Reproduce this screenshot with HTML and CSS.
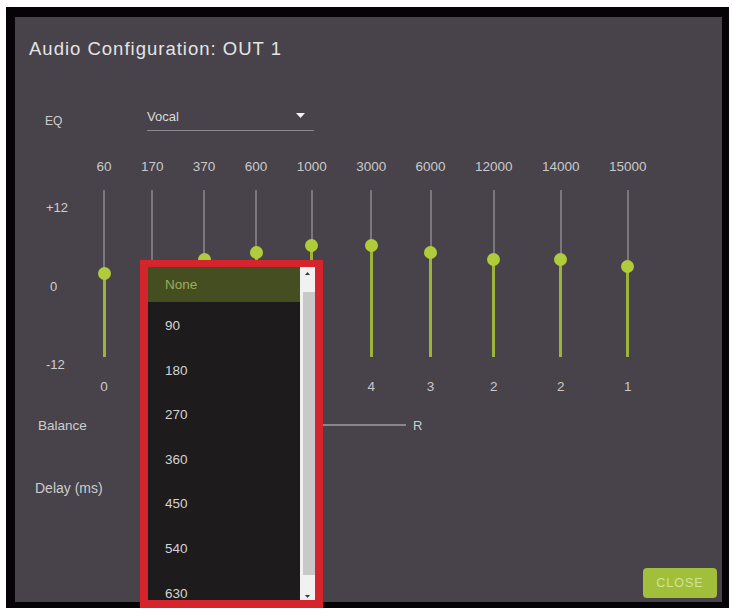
FILE: index.html
```html
<!DOCTYPE html>
<html lang="en">
<head>
<meta charset="utf-8">
<title>Audio Configuration: OUT 1</title>
<link rel="stylesheet" href="styles.css">
</head>
<body>
<div class="frame">
  <div class="panel">
    <h1 class="title">Audio Configuration: OUT 1</h1>

    <div class="eq-row">
      <span class="lbl eq-lbl">EQ</span>
      <div class="select">
        <span>Vocal</span>
        <svg class="caret" width="9" height="5" viewBox="0 0 9 5"><path d="M0 0H9L4.5 5Z"/></svg>
      </div>
    </div>

    <div class="eq">
      <div class="axis">
        <span>+12</span>
        <span class="zero">0</span>
        <span>-12</span>
      </div>
      <div class="bands">
        <div class="band" style="--p:50%"><span class="freq">60</span><div class="track"><div class="fill"></div><div class="thumb"></div></div><span class="val">0</span></div>
        <div class="band" style="--p:54.17%"><span class="freq">170</span><div class="track"><div class="fill"></div><div class="thumb"></div></div><span class="val">1</span></div>
        <div class="band" style="--p:58.33%"><span class="freq">370</span><div class="track"><div class="fill"></div><div class="thumb"></div></div><span class="val">2</span></div>
        <div class="band" style="--p:62.5%"><span class="freq">600</span><div class="track"><div class="fill"></div><div class="thumb"></div></div><span class="val">3</span></div>
        <div class="band" style="--p:66.67%"><span class="freq">1000</span><div class="track"><div class="fill"></div><div class="thumb"></div></div><span class="val">4</span></div>
        <div class="band" style="--p:66.67%"><span class="freq">3000</span><div class="track"><div class="fill"></div><div class="thumb"></div></div><span class="val">4</span></div>
        <div class="band" style="--p:62.5%"><span class="freq">6000</span><div class="track"><div class="fill"></div><div class="thumb"></div></div><span class="val">3</span></div>
        <div class="band" style="--p:58.33%"><span class="freq">12000</span><div class="track"><div class="fill"></div><div class="thumb"></div></div><span class="val">2</span></div>
        <div class="band" style="--p:58.33%"><span class="freq">14000</span><div class="track"><div class="fill"></div><div class="thumb"></div></div><span class="val">2</span></div>
        <div class="band" style="--p:54.17%"><span class="freq">15000</span><div class="track"><div class="fill"></div><div class="thumb"></div></div><span class="val">1</span></div>
      </div>
    </div>

    <div class="balance-row">
      <span class="lbl balance-lbl">Balance</span>
      <div class="hline"></div>
      <span class="side">R</span>
    </div>

    <div class="delay-row">
      <span class="lbl delay-lbl">Delay (ms)</span>
    </div>

    <div class="footer">
      <button class="close" type="button">CLOSE</button>
    </div>

    <!-- open option list of the delay select -->
    <div class="listbox">
      <div class="options">
        <div class="opt sel">None</div>
        <div class="opt">90</div>
        <div class="opt">180</div>
        <div class="opt">270</div>
        <div class="opt">360</div>
        <div class="opt">450</div>
        <div class="opt">540</div>
        <div class="opt">630</div>
      </div>
      <div class="scrollbar">
        <div class="sb-btn sb-up"><svg width="5" height="3" viewBox="0 0 5 3"><path d="M0 3H5L2.5 0Z"/></svg></div>
        <div class="sb-thumb"></div>
        <div class="sb-btn sb-down"><svg width="5" height="3" viewBox="0 0 5 3"><path d="M0 0H5L2.5 3Z"/></svg></div>
      </div>
    </div>
  </div>
</div>
</body>
</html>
```

FILE: styles.css
```css
html, body {
  margin: 0;
  padding: 0;
  background: #ffffff;
}

body {
  font-family: "Liberation Sans", Arial, sans-serif;
  color: #cfcfcf;
}

.frame {
  width: 723px;
  box-sizing: border-box;
  margin: 7px 0 0 6px;
  background: #050305;
  border-style: solid;
  border-color: #050305;
  border-width: 10px 7px 6px 9px;
}

.panel {
  position: relative;
  height: 585px;
  box-sizing: border-box;
  padding: 21px 5px 4px 14px;
  background: #48434a;
  display: flex;
  flex-direction: column;
}

.title {
  margin: 0;
  font-size: 18.5px;
  line-height: 22px;
  font-weight: normal;
  letter-spacing: 1px;
  color: #e4e4e4;
}

.lbl {
  font-size: 13px;
  line-height: 16px;
  color: #cdcdcd;
}

/* EQ preset row */
.eq-row {
  display: flex;
  align-items: flex-start;
  margin-top: 44px;
  padding-left: 16px;
}

.eq-lbl {
  width: 102px;
  margin-top: 9px;
  font-size: 12px;
}

.select {
  width: 167px;
  box-sizing: border-box;
  padding: 5px 9px 5px 0;
  border-bottom: 1px solid #8c8890;
  display: flex;
  justify-content: space-between;
  align-items: center;
  font-size: 13px;
  line-height: 16px;
  color: #dadada;
}

.caret {
  fill: #f2f2f2;
  margin-top: -4px;
}

/* graphic equaliser */
.eq {
  display: flex;
  margin-top: 28px;
  padding-left: 17px;
}

.axis {
  width: 50.5px;
  height: 173px;
  margin-top: 41px;
  display: flex;
  flex-direction: column;
  justify-content: space-between;
  font-size: 13px;
  line-height: 16px;
  color: #cfcfcf;
}

.axis .zero {
  padding-left: 4px;
}

.bands {
  display: flex;
  gap: 29.4px;
}

.band {
  display: flex;
  flex-direction: column;
  align-items: center;
  font-size: 13.5px;
  line-height: 16px;
  color: #c9c9c9;
}

.track {
  position: relative;
  width: 2px;
  height: 167px;
  margin-top: 15px;
  background: #7b777e;
}

.fill {
  position: absolute;
  left: -0.5px;
  bottom: 0;
  width: 3px;
  height: var(--p);
  background: #9db43b;
}

.thumb {
  position: absolute;
  left: 50%;
  bottom: var(--p);
  width: 13px;
  height: 13px;
  margin: 0 0 -6.5px -6.5px;
  border-radius: 50%;
  background: #b1cc3a;
}

.val {
  margin-top: 22px;
}

/* balance */
.balance-row {
  display: flex;
  align-items: center;
  margin-top: 23px;
  padding-left: 9px;
}

.balance-lbl {
  width: 122px;
  font-size: 13.5px;
}

.side {
  font-size: 13px;
  line-height: 16px;
  color: #cdcdcd;
}

.hline {
  width: 246px;
  height: 2px;
  margin: -3px 7px 0 0;
  background: #8a868d;
}

/* delay */
.delay-row {
  display: flex;
  align-items: center;
  margin-top: 46px;
  padding-left: 6px;
}

.delay-lbl {
  width: 113px;
  font-size: 14px;
}

.footer {
  margin-top: auto;
  display: flex;
  justify-content: flex-end;
}

.close {
  width: 74px;
  height: 30px;
  border: none;
  border-radius: 4px;
  background: #a1bf3b;
  color: #d2e398;
  font-family: "Liberation Sans", Arial, sans-serif;
  font-size: 12.5px;
  letter-spacing: 1px;
  padding: 0;
}

/* dropdown list */
.listbox {
  position: absolute;
  left: 125px;
  top: 243px;
  width: 183px;
  height: 348px;
  box-sizing: border-box;
  border-style: solid;
  border-color: #d6242c;
  border-width: 7px 8px 8px 8px;
  background: #1e1b1d;
  display: flex;
}

.options {
  flex: 1;
  overflow: hidden;
}

.opt {
  height: 44.6px;
  box-sizing: border-box;
  padding: 4px 0 0 17px;
  line-height: 40.6px;
  font-size: 13.5px;
  color: #d4d4d4;
}

.opt.sel {
  height: 35px;
  padding-top: 0;
  line-height: 35px;
  background: #454e21;
  color: #9dad57;
}

.scrollbar {
  width: 15px;
  display: flex;
  flex-direction: column;
  background: #f1f1f1;
}

.sb-btn {
  height: 25px;
  display: flex;
  justify-content: center;
  fill: #3a3a3a;
}

.sb-up {
  align-items: flex-start;
  padding-top: 5px;
  box-sizing: border-box;
}

.sb-down {
  align-items: flex-end;
  padding-bottom: 2px;
  box-sizing: border-box;
}

.sb-thumb {
  flex: 1;
  margin-left: 3px;
  background: #c8c8c8;
}
```
